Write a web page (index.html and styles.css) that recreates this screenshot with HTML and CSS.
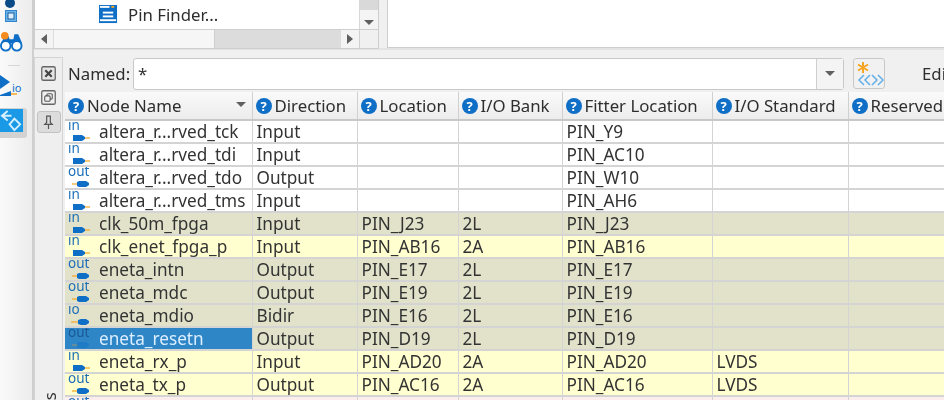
FILE: index.html
```html
<!DOCTYPE html>
<html lang="en">
<head>
<meta charset="utf-8">
<title>Pin Planner</title>
<link rel="stylesheet" href="styles.css">
</head>
<body>
<div class="app">
  <aside class="toolbar">
    <span class="dot"></span>
    <svg class="ti ti-a" viewBox="0 0 12 12"><rect x=".5" y=".5" width="11" height="11" fill="#6db4ea" stroke="#2f86cf"/><rect x="3" y="3" width="6" height="6" fill="#dcefff" stroke="#1c5f9c"/></svg>
    <svg class="ti ti-b" viewBox="0 0 24 22"><path d="M1 12 5 5h4l1 3h4l1-5h4l4 9z" fill="#0f6fc6"/><circle cx="6" cy="15" r="5" fill="#fff" stroke="#0f6fc6" stroke-width="2"/><circle cx="17.500" cy="15" r="5" fill="#fff" stroke="#0f6fc6" stroke-width="2"/><circle cx="5" cy="4.500" r="4" fill="#f58a1f"/></svg>
    <hr class="tsep">
    <svg class="ti ti-c" viewBox="0 0 24 24"><path d="M0 0 10 7 0 14z" fill="#0f6fc6"/><path d="M0 20 11 16v5H0z" fill="#0f6fc6"/><path d="M11 19h6" stroke="#f5a623" stroke-width="1.500"/><text x="12" y="17" class="tio">io</text></svg>
    <div class="ti-active"><svg viewBox="0 0 24 24"><rect width="24" height="24" fill="#1a9ae6"/><path d="M8 2 2 7l6 5M3 7h9" fill="none" stroke="#d5efff" stroke-width="2"/><path d="M15 10l6 6-6 6-5-6z" fill="none" stroke="#d5efff" stroke-width="2"/></svg></div>
  </aside>
  <main class="main">
    <section class="top">
      <div class="tree">
        <div class="tree-body">
          <div class="tree-content">
            <svg class="finder" viewBox="0 0 20 20"><rect width="19" height="19" fill="#0f6fc6"/><rect x="13" y="1" width="3" height="2" fill="#f5a623"/><rect x="1" y="1" width="10" height="2" fill="#fff"/><rect x="4" y="7" width="11" height="2" fill="#fff"/><rect x="4" y="11" width="11" height="2" fill="#fff"/><rect x="1" y="15" width="17" height="2" fill="#fff"/></svg>
            <span class="finder-label">Pin Finder...</span>
          </div>
          <div class="vscroll"><span class="vthumb"></span><span class="arr-down"></span></div>
        </div>
        <div class="hscroll">
          <span class="hbtn"><span class="arr-left"></span></span>
          <span class="htrack"><span class="hfill"></span><span class="hthumb"></span></span>
          <span class="hbtn"><span class="arr-right"></span></span>
          <span class="hcorner"></span>
        </div>
      </div>
      <div class="right-panel"></div>
    </section>
    <section class="dock">
      <div class="dock-tools">
        <svg class="dt" viewBox="0 0 14 14"><rect x=".7" y=".7" width="12.600" height="12.600" rx="1.500" fill="#e4e4e4" stroke="#666" stroke-width="1.200"/><path d="M4 4l6 6M10 4l-6 6" stroke="#444" stroke-width="2"/></svg>
        <svg class="dt dt2" viewBox="0 0 14 14"><rect x=".7" y=".7" width="12.600" height="12.600" rx="1.500" fill="#f0f0f0" stroke="#666" stroke-width="1.200"/><rect x="5.500" y="3.500" width="5" height="5" rx="1" fill="none" stroke="#555"/><rect x="3.500" y="5.500" width="5" height="5" rx="1" fill="#f0f0f0" stroke="#555"/></svg>
        <span class="pin"><svg viewBox="0 0 12 16"><path d="M4 1h4v7l2 2H2l2-2zM6 10v5" fill="none" stroke="#555" stroke-width="1.300"/></svg></span>
        <span class="vlabel">Pins</span>
      </div>
      <div class="dock-main">
        <div class="filter">
          <label class="named">Named:</label>
          <div class="combo"><span class="combo-text">*</span><span class="combo-btn"><span class="arr-down"></span></span></div>
          <span class="wizard"><svg viewBox="0 0 30 29"><path d="M9 3v11M4 5.500l10 6M14 5.500l-10 6" stroke="#f5a623" stroke-width="2"/><path d="M10 16l-5 5 5 5M16 16l-5 5 5 5M18 16l5 5-5 5M24 16l5 5-5 5" fill="none" stroke="#62aee8" stroke-width="1.500"/></svg></span>
          <span class="edit">Edit</span>
        </div>
        <table class="pins">
          <colgroup><col class="c1"><col class="c2"><col class="c3"><col class="c4"><col class="c5"><col class="c6"><col class="c7"></colgroup>
          <thead><tr>
            <th><span class="q">?</span>Node Name<span class="sort"></span></th>
            <th><span class="q">?</span>Direction</th>
            <th><span class="q">?</span>Location</th>
            <th><span class="q">?</span>I/O Bank</th>
            <th><span class="q">?</span>Fitter Location</th>
            <th><span class="q">?</span>I/O Standard</th>
            <th><span class="q">?</span>Reserved</th>
          </tr></thead>
          <tbody id="rows"></tbody>
        </table>
      </div>
    </section>
  </main>
</div>
<script src="app.js"></script>
</body>
</html>
```
FILE: app.js
```js
var data = [
  ["in","altera_r...rved_tck","Input","","","PIN_Y9","",""],
  ["in","altera_r...rved_tdi","Input","","","PIN_AC10","",""],
  ["out","altera_r...rved_tdo","Output","","","PIN_W10","",""],
  ["in","altera_r...rved_tms","Input","","","PIN_AH6","",""],
  ["in","clk_50m_fpga","Input","PIN_J23","2L","PIN_J23","","g"],
  ["in","clk_enet_fpga_p","Input","PIN_AB16","2A","PIN_AB16","","y"],
  ["out","eneta_intn","Output","PIN_E17","2L","PIN_E17","","g"],
  ["out","eneta_mdc","Output","PIN_E19","2L","PIN_E19","","g"],
  ["io","eneta_mdio","Bidir","PIN_E16","2L","PIN_E16","","g"],
  ["out","eneta_resetn","Output","PIN_D19","2L","PIN_D19","","s"],
  ["in","eneta_rx_p","Input","PIN_AD20","2A","PIN_AD20","LVDS","y"],
  ["out","eneta_tx_p","Output","PIN_AC16","2A","PIN_AC16","LVDS","y"],
  ["out","eneta_txd[0]","Output","PIN_AD16","2A","PIN_AD16","","p"]
];
var pinIcon = {
  in: '<path d="M0 0h9l3 2v2l-3 2H0z" fill="#0f6fc6"/><path d="M12 3h5" stroke="#f5a623" stroke-width="1.200"/>',
  out: '<path d="M0 3h5" stroke="#f5a623" stroke-width="1.200"/><path d="M5 1l2-1h7l3 2v2l-3 2H7L5 5z" fill="#0f6fc6"/>',
  io: '<path d="M0 3h7" stroke="#f5a623" stroke-width="1.200"/><path d="M7 1l3-1h5l3 2v2l-3 2h-5L7 5z" fill="#0f6fc6"/>'
};
var rows = document.getElementById("rows");
data.forEach(function (d) {
  var tr = document.createElement("tr");
  if (d[7]) tr.className = "row-" + d[7];
  var cells = '<td class="node"><span class="ptype">' + d[0] + '</span><svg class="pinicon pi-' + d[0] + '" viewBox="0 0 18 7">' + pinIcon[d[0]] + '</svg>' + d[1] + '</td>';
  [2, 3, 4, 5, 6].forEach(function (i) { cells += "<td>" + d[i] + "</td>"; });
  tr.innerHTML = cells + "<td></td>";
  rows.appendChild(tr);
});
```
FILE: styles.css
```css
html, body { margin: 0; padding: 0; width: 944px; height: 400px; overflow: hidden; background: #f0f0f0; }
body { font-family: "Noto Sans", sans-serif; font-size: 16.800px; color: #2e2e2e; }
.app { display: flex; height: 400px; filter: blur(.5px); }
.toolbar { width: 32px; flex: none; border-right: 2px solid #cfcfcf; background: linear-gradient(90deg, #fafafa, #ececec); display: flex; flex-direction: column; align-items: flex-start; }
.dot { width: 10px; height: 10px; border-radius: 50%; background: #0a4a86; margin: -2px 0 0 5px; }
.ti { display: block; }
.ti-a { width: 12px; height: 12px; margin: 2px 0 0 5px; }
.ti-b { width: 23px; height: 22px; margin-top: 9px; }
.tsep { width: 12px; border: 0; border-top: 1px solid #d6d6d6; margin: 12px 0 9px 8px; }
.ti-c { width: 24px; height: 24px; }
.tio { font: 11px "Noto Sans", sans-serif; fill: #0f6fc6; }
.ti-active { width: 27px; height: 30px; margin-top: 9px; padding: 0 4px 5px 0; box-sizing: border-box; background: #d2d2d2; border-radius: 0 3px 3px 0; }
.ti-active svg { display: block; width: 100%; height: 100%; }
.main { flex: 1; min-width: 0; display: flex; flex-direction: column; }
.top { height: 50px; display: flex; flex: none; gap: 8px; box-sizing: border-box; border-bottom: 2px solid #e4e4e4; }
.tree { width: 345px; height: 49px; box-sizing: border-box; border: 1px solid #cdcdcd; border-top: 0; display: flex; flex-direction: column; background: #fff; flex: none; }
.tree-body { flex: 1; display: flex; min-height: 0; }
.tree-content { flex: 1; display: flex; align-items: center; padding-left: 64px; gap: 10px; }
.finder { width: 19px; height: 19px; }
.finder-label { font-size: 16.800px; line-height: 20px; }
.vscroll { width: 18px; background: #f4f4f4; border-left: 1px solid #d8d8d8; display: flex; flex-direction: column; align-items: center; justify-content: flex-end; position: relative; }
.vthumb { position: absolute; top: 0; left: 0; right: 0; height: 10px; background: #d9d9d9; }
.vscroll .arr-down { margin-bottom: 4px; }
.arr-down { width: 0; height: 0; border-left: 5px solid transparent; border-right: 5px solid transparent; border-top: 5px solid #606060; display: inline-block; }
.hscroll { height: 18px; flex: none; display: flex; border-top: 1px solid #cfcfcf; background: #f4f4f4; }
.hbtn { width: 18px; display: flex; align-items: center; justify-content: center; border-right: 1px solid #dcdcdc; flex: none; }
.hbtn:nth-child(3) { border-right: 0; border-left: 1px solid #dcdcdc; }
.arr-left { border-top: 5px solid transparent; border-bottom: 5px solid transparent; border-right: 6px solid #606060; }
.arr-right { border-top: 5px solid transparent; border-bottom: 5px solid transparent; border-left: 6px solid #606060; }
.htrack { flex: 1; display: flex; }
.hfill { width: 160px; background: #f6f6f6; border-right: 1px solid #cfcfcf; }
.hthumb { flex: 1; background: #dcdcdc; }
.hcorner { width: 18px; flex: none; border-left: 1px solid #d0d0d0; background: #f0f0f0; }
.right-panel { flex: 1; height: 48px; background: #fff; border: 1px solid #cdcdcd; border-top: 0; border-right: 0; box-sizing: border-box; }
.dock { flex: 1; min-height: 0; display: flex; padding-top: 7px; overflow: hidden; }
.dock-tools { width: 29px; flex: none; border: 1px solid #d4d4d4; border-bottom: 0; box-sizing: border-box; display: flex; flex-direction: column; align-items: center; padding-top: 8px; background: #efefef; position: relative; overflow: hidden; }
.dt { width: 15px; height: 15px; display: block; }
.dt2 { margin-top: 9px; }
.pin { width: 22px; height: 20px; margin-top: 6px; background: #dcdcdc; border: 1px solid #c2c2c2; border-radius: 3px; display: flex; align-items: center; justify-content: center; }
.pin svg { width: 11px; height: 15px; }
.vlabel { position: absolute; left: 5px; top: 324px; writing-mode: vertical-rl; transform: rotate(180deg); font-size: 16.800px; line-height: 20px; height: 43px; color: #333; }
.dock-main { flex: 1; min-width: 0; overflow: hidden; padding-left: 2px; }
.filter { height: 33px; display: flex; align-items: center; }
.named { width: 68px; padding-left: 3px; flex: none; box-sizing: border-box; }
.combo { width: 711px; height: 32px; flex: none; box-sizing: border-box; background: #fff; border: 1px solid #c8c8c8; border-radius: 3px; display: flex; align-items: center; }
.combo-text { flex: 1; padding-left: 4px; font-weight: 400; }
.combo-btn { width: 26px; height: 100%; flex: none; border-left: 1px solid #cfcfcf; background: #f4f4f4; display: flex; align-items: center; justify-content: center; }
.wizard { width: 32px; height: 31px; flex: none; margin-left: 9px; box-sizing: border-box; background: #f1f1f1; border: 1px solid #c8c8c8; border-radius: 3px; display: block; }
.wizard svg { display: block; width: 100%; height: 100%; }
.edit { margin-left: 37px; white-space: nowrap; }
.pins { border-collapse: collapse; table-layout: fixed; width: 900px; margin-top: 2px; }
.c1 { width: 187px; } .c2 { width: 105px; } .c3 { width: 101px; } .c4 { width: 104px; } .c5 { width: 150px; } .c6 { width: 136px; } .c7 { width: 117px; }
.pins th { height: 28px; padding: 0 0 0 3px; box-sizing: border-box; text-align: left; font-weight: 400; background: linear-gradient(#fafafa, #ececec); border-right: 1px solid #d0d0d0; border-bottom: 2px solid #c8c8c8; white-space: nowrap; overflow: hidden; position: relative; }
.q { display: inline-block; width: 16px; height: 16px; border-radius: 50%; background: #0f6fc6; color: #fff; font-size: 13px; font-weight: 700; line-height: 16px; text-align: center; margin-right: 3px; vertical-align: 1px; }
.sort { position: absolute; right: 6px; top: 10px; width: 0; height: 0; border-left: 5px solid transparent; border-right: 5px solid transparent; border-top: 5px solid #606060; }
.pins td { height: 23px; padding: 0 0 0 4px; box-sizing: border-box; background: #fff; border-right: 1px solid #d4d4d4; border-bottom: 2px solid #d4d4d4; white-space: nowrap; overflow: hidden; line-height: 20px; color: #333; font-size: 17.200px; }
.pins td.node { position: relative; padding-left: 34px; }
.ptype { position: absolute; left: 3px; top: -3px; font-size: 13.500px; line-height: 15px; color: #1d6fb8; }
.pinicon { position: absolute; top: 14px; width: 18px; height: 7px; left: 8px; }
.pi-out { left: 7px; }
.pi-io { left: 6px; }
.pins .row-g td, .pins .row-s td { background: #e2e2cb; }
.pins .row-y td { background: #ffffcf; }
.pins .row-p td { background: #fdeeee; }
.pins .row-s td.node { background: #2e86c6; color: #dceeff; }
.row-s .ptype { color: #1a5a94; }
.row-s .pinicon { opacity: .45; }
```
